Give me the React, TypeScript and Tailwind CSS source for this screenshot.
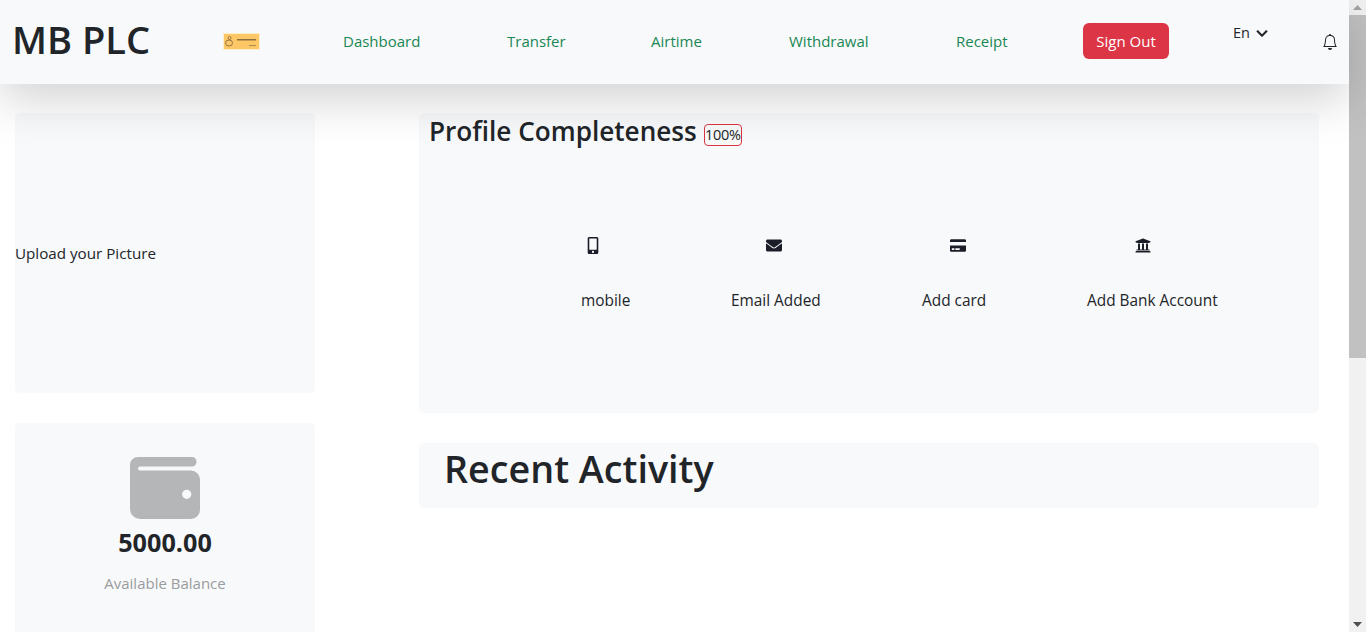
import { BsBell } from "react-icons/bs"
import { FaChevronDown, FaCreditCard, FaEnvelope, FaMobileAlt, FaUniversity } from "react-icons/fa"

const navLinks = [
  { label: "Dashboard", width: "w-[164px]" },
  { label: "Transfer", width: "w-[144px]" },
  { label: "Airtime", width: "w-[138px]" },
  { label: "Withdrawal", width: "w-[167px]" },
  { label: "Receipt", width: "w-[127px]" },
]

const steps = [
  { label: "mobile", Icon: FaMobileAlt, width: "w-[150px]", indent: "pl-[4px]" },
  { label: "Email Added", Icon: FaEnvelope, width: "w-[191px]", indent: "pl-[35px]" },
  { label: "Add card", Icon: FaCreditCard, width: "w-[165px]", indent: "pl-[28px]" },
  { label: "Add Bank Account", Icon: FaUniversity, width: "w-[140px]", indent: "pl-[48px]" },
]

function Logo() {
  return (
    <svg viewBox="0 0 37 17" className="mb-[2px] h-[17px] w-[37px]">
      <rect width="37" height="17" fill="#fdeec9" />
      <rect x="1" y="1" width="35" height="15" fill="#fdc766" />
      <circle cx="6.500" cy="5" r="1.500" fill="none" stroke="#7a6238" strokeWidth="0.700" />
      <ellipse cx="6" cy="10" rx="3.500" ry="3" fill="none" stroke="#7a6238" strokeWidth="0.800" />
      <rect x="14" y="6" width="19" height="1.500" fill="#8a7040" />
      <rect x="26" y="12" width="7" height="1" fill="#a98a50" />
    </svg>
  )
}

function WalletIcon() {
  return (
    <svg viewBox="0 0 70 62" className="h-[62px] w-[70px]">
      <path
        fill="#b4b6b8"
        d="M8 0h54a4.500 4.500 0 0 1 4.500 4.500v.5a4.500 4.500 0 0 1-4.500 4.500H10a2 2 0 0 0 0 4H61a9 9 0 0 1 9 9v30.500a9 9 0 0 1-9 9H10a10 10 0 0 1-10-10V8a8 8 0 0 1 8-8z"
      />
      <circle cx="56.700" cy="37.300" r="4.600" fill="#f8f9fa" />
    </svg>
  )
}

function Scrollbar() {
  return (
    <div className="flex h-[632px] w-[17px] shrink-0 flex-col bg-[#f1f1f1]">
      <svg viewBox="0 0 17 15" className="h-[15px] w-[17px]">
        <polygon points="8.500,5 13,10 4,10" fill="#a3a3a3" />
      </svg>
      <div className="h-[343px] w-full bg-[#c1c1c1]" />
      <div className="flex-1" />
      <svg viewBox="0 0 17 15" className="h-[15px] w-[17px]">
        <polygon points="4,5 13,5 8.500,10" fill="#505050" />
      </svg>
    </div>
  )
}

export default function App() {
  return (
    <div className="flex h-[632px] overflow-hidden bg-white font-['Open_Sans',sans-serif] text-[#212529]">
      <div className="w-[1349px] shrink-0">
        <header className="relative z-10 flex h-[84px] items-center bg-[#f8f9fa] shadow-[0_16px_48px_rgba(0,0,0,0.175)]">
          <h1 className="mb-[7px] ml-[12px] w-[211px] text-[38px] leading-none font-semibold">MB PLC</h1>
          <Logo />
          <nav className="mb-[2px] ml-[83px] flex items-center">
            {navLinks.map((link) => (
              <a key={link.label} className={`${link.width} text-[15px] text-[#198754]`}>
                {link.label}
              </a>
            ))}
          </nav>
          <button className="mb-[2px] flex h-[36px] w-[86px] items-center justify-center rounded-[6px] bg-[#dc3545] text-[15px] text-white">
            Sign Out
          </button>
          <div className="mb-[18px] ml-[64px] flex w-[89px] items-center gap-[5px] text-[14.500px]">
            En <FaChevronDown className="h-[13px] w-[14px]" />
          </div>
          <BsBell className="h-[16px] w-[16px]" />
        </header>

        <main className="flex items-start pt-[29px] pl-[15px]">
          <aside className="flex w-[300px] shrink-0 flex-col gap-[30px]">
            <div className="flex h-[280px] items-center rounded-[5px] bg-[#f8f9fa] text-[15.200px]">
              Upload your Picture
            </div>
            <div className="flex h-[300px] flex-col items-center rounded-[5px] bg-[#f8f9fa] pt-[34px]">
              <WalletIcon />
              <div className="mt-[5px] text-[25.200px] leading-[36px] font-bold">5000.00</div>
              <div className="mt-[12px] text-[15px] leading-[22px] text-[#9a9c9e]">Available Balance</div>
            </div>
          </aside>

          <section className="ml-[104px] flex w-[900px] shrink-0 flex-col gap-[30px]">
            <div className="h-[300px] rounded-[5px] bg-[#f8f9fa] pl-[10px]">
              <div className="flex items-center gap-[7px]">
                <h2 className="text-[26.150px] leading-[36px] font-semibold">Profile Completeness</h2>
                <span className="mt-[7px] flex h-[22px] w-[38px] items-center justify-center rounded-[4px] border border-[#dc3545] text-[14.500px] tracking-[-0.3px]">
                  100%
                </span>
              </div>
              <div className="mt-[86px] ml-[152px] flex">
                {steps.map(({ label, Icon, width, indent }) => (
                  <div key={label} className={`${width} shrink-0`}>
                    <div className={`flex h-[20px] items-center ${indent}`}>
                      <Icon className="h-[17px] text-[#1b1e29]" />
                    </div>
                    <div className="mt-[35px] text-[15.400px] leading-[22px] whitespace-nowrap">{label}</div>
                  </div>
                ))}
              </div>
            </div>
            <div className="flex h-[65px] items-center rounded-[5px] bg-[#f8f9fa] pb-[14px] pl-[25px]">
              <h2 className="text-[37.700px] leading-none font-semibold">Recent Activity</h2>
            </div>
          </section>
        </main>
      </div>
      <Scrollbar />
    </div>
  )
}
